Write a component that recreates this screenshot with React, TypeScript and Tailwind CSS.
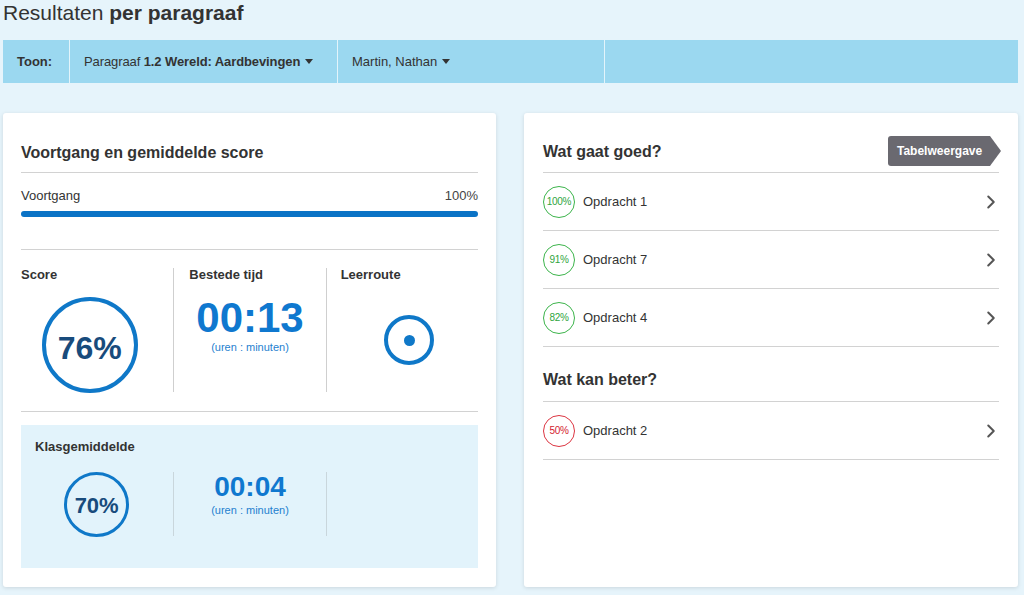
import { ChevronRight } from 'lucide-react';

const font = { fontFamily: '"Liberation Sans", Arial, sans-serif' };

const Caret = () => (
  <span className="ml-[5px] inline-block h-0 w-0 border-x-[4px] border-t-[5px] border-x-transparent border-t-[#333] align-middle" />
);

const Badge = ({ value, tone }: { value: string; tone: 'good' | 'bad' }) => (
  <div
    className={
      tone === 'good'
        ? 'flex h-[32px] w-[32px] shrink-0 items-center justify-center rounded-full border border-[#3cb44b] text-[10px] tracking-[-0.3px] text-[#2fa53e]'
        : 'flex h-[32px] w-[32px] shrink-0 items-center justify-center rounded-full border border-[#dc3541] text-[10px] tracking-[-0.3px] text-[#d4222f]'
    }
  >
    {value}
  </div>
);

const Row = ({ value, name, tone }: { value: string; name: string; tone: 'good' | 'bad' }) => (
  <div className="flex h-[58px] items-center border-b border-[#d2d2d2]">
    <Badge value={value} tone={tone} />
    <span className="ml-[8px] flex-1 text-[13px] text-[#333]">{name}</span>
    <ChevronRight size={22} strokeWidth={2.2} className="mr-[-3px] text-[#555]" />
  </div>
);

export default function App() {
  return (
    <div className="min-h-[595px] bg-[#e6f4fb] text-[#333]" style={font}>
      {/* titel */}
      <div className="flex h-[40px] items-start px-[3px] pt-[0px]">
        <h1 className="text-[21px] leading-[26px] text-[#333]">
          Resultaten <span className="font-bold">per paragraaf</span>
        </h1>
      </div>

      {/* filterbalk */}
      <div className="mx-[3px] mr-[6px] flex h-[43px] items-stretch bg-[#9bd8f0] text-[13px]">
        <div className="flex w-[66px] items-center pl-[14px] font-bold">Toon:</div>
        <div className="flex w-[268px] items-center border-l border-[#e3f4fb] pl-[14px] tracking-[-0.1px]">
          Paragraaf&nbsp;<span className="font-bold">1.2 Wereld: Aardbevingen</span>
          <Caret />
        </div>
        <div className="flex w-[267px] items-center border-l border-[#e3f4fb] pl-[14px]">
          Martin, Nathan
          <Caret />
        </div>
        <div className="flex-1 border-l border-[#e3f4fb]" />
      </div>

      <div className="mt-[30px] flex gap-[28px] pl-[3px] pr-[6px]">
        {/* linker kaart */}
        <div className="h-[474px] w-[493px] rounded-[3px] bg-white px-[18px] shadow-[0_1px_4px_rgba(0,0,0,0.12)]">
          <h2 className="border-b border-[#d2d2d2] pb-[9px] pt-[30px] text-[16px] font-bold leading-[20px]">
            Voortgang en gemiddelde score
          </h2>
          <div className="border-b border-[#d2d2d2] pb-[32px]">
            <div className="mt-[14px] flex justify-between text-[13px] leading-[18px]">
              <span>Voortgang</span>
              <span className="text-[#444]">100%</span>
            </div>
            <div className="mt-[6px] h-[6px] rounded-[3px] bg-[#0b73c6]" />
          </div>

          <div className="grid grid-cols-3 border-b border-[#d2d2d2] pb-[19px] pt-[18px]">
            <div className="flex h-[124px] flex-col pr-[15px]">
              <div className="text-[13px] font-bold leading-[14px]">Score</div>
              <div className="mt-[15px] flex justify-center">
                <div className="flex h-[96px] w-[96px] items-center justify-center rounded-full border-[4px] border-[#0f78c8]">
                  <span className="mt-[6px] text-[32px] font-bold text-[#184b7c]">76%</span>
                </div>
              </div>
            </div>
            <div className="flex h-[124px] flex-col border-l border-[#cfcfcf] px-[15px]">
              <div className="text-[13px] font-bold leading-[14px]">Bestede tijd</div>
              <div className="mt-[14px] text-center text-[42px] font-bold leading-[44px] text-[#0f78cf]">
                00:13
              </div>
              <div className="text-center text-[11px] leading-[14px] text-[#1f7fcf]">(uren : minuten)</div>
            </div>
            <div className="flex h-[124px] flex-col border-l border-[#cfcfcf] pl-[14px]">
              <div className="text-[13px] font-bold leading-[14px]">Leerroute</div>
              <div className="mt-[33px] flex justify-center">
                <div className="flex h-[50px] w-[50px] items-center justify-center rounded-full border-[4px] border-[#0f78c8]">
                  <div className="h-[11px] w-[11px] rounded-full bg-[#0f78c8]" />
                </div>
              </div>
            </div>
          </div>

          <div className="mt-[13px] h-[143px] bg-[#e2f3fb] pt-[14px]">
            <div className="pl-[14px] text-[13px] font-bold leading-[16px]">Klasgemiddelde</div>
            <div className="mt-[17px] grid grid-cols-3">
              <div className="flex h-[64px] items-center justify-center pl-[14px] pr-[15px]">
                <div className="flex h-[65px] w-[65px] items-center justify-center rounded-full border-[3px] border-[#0f78c8]">
                  <span className="mt-[2px] text-[22px] font-bold text-[#184b7c]">70%</span>
                </div>
              </div>
              <div className="flex h-[64px] flex-col border-l border-[#c9d6dc] px-[15px]">
                <div className="mt-[-1px] text-center text-[28px] font-bold leading-[32px] text-[#0f78cf]">
                  00:04
                </div>
                <div className="text-center text-[11px] leading-[14px] text-[#1f7fcf]">(uren : minuten)</div>
              </div>
              <div className="h-[64px] border-l border-[#c9d6dc]" />
            </div>
          </div>
        </div>

        {/* rechter kaart */}
        <div className="h-[474px] flex-1 rounded-[3px] bg-white px-[19px] shadow-[0_1px_4px_rgba(0,0,0,0.12)]">
          <div className="flex items-end justify-between border-b border-[#d2d2d2] pt-[23px]">
            <h2 className="pb-[10px] text-[16px] font-bold leading-[20px]">Wat gaat goed?</h2>
            <div className="mb-[6px] mr-[-2px] flex h-[30px] w-[113px] items-center rounded-l-[3px] bg-[#6a6970] pl-[9px] text-[12px] font-bold text-white [clip-path:polygon(0_0,calc(100%-11px)_0,100%_50%,calc(100%-11px)_100%,0_100%)]">
              Tabelweergave
            </div>
          </div>
          <Row value="100%" name="Opdracht 1" tone="good" />
          <Row value="91%" name="Opdracht 7" tone="good" />
          <Row value="82%" name="Opdracht 4" tone="good" />
          <h2 className="border-b border-[#d2d2d2] pb-[11px] pt-[23px] text-[16px] font-bold leading-[20px]">
            Wat kan beter?
          </h2>
          <Row value="50%" name="Opdracht 2" tone="bad" />
        </div>
      </div>
    </div>
  );
}
